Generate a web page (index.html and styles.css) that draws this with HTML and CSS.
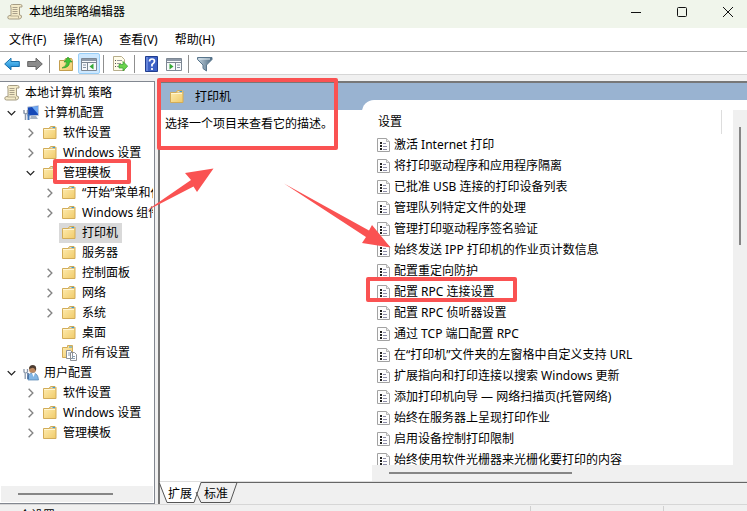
FILE: index.html
```html
<!DOCTYPE html>
<html lang="zh-CN">
<head>
    <meta charset="UTF-8">
    <meta name="viewport" content="width=device-width, initial-scale=1.0">
    <title>本地组策略编辑器</title>
    <link rel="stylesheet" href="styles.css">
</head>
<body>
    <!-- 图标 -->
    <svg class="defs" aria-hidden="true">
        <linearGradient id="gold" x1="0" y1="0" x2="1" y2="1">
            <stop offset="0" stop-color="#ffeeb5"/><stop offset="1" stop-color="#f0ca68"/>
        </linearGradient>
        <linearGradient id="blue" x1="0" y1="0" x2="0" y2="1">
            <stop offset="0" stop-color="#6fd0fa"/><stop offset="1" stop-color="#1480cf"/>
        </linearGradient>
        <linearGradient id="steel" x1="0" y1="0" x2="1" y2="0">
            <stop offset="0" stop-color="#c3d3df"/><stop offset="1" stop-color="#4e6b82"/>
        </linearGradient>
        <symbol id="folder" viewBox="0 0 16 16">
            <path d="M1.500 13.500v-10h6V2.500l1-1h4.500l1 1v11z" fill="url(#gold)" stroke="#d3ac58"/>
            <path d="M8 3.500l1-1.500h4v1.500z" fill="#fff" stroke="#c9a95c" stroke-width=".6"/>
            <path d="M10.500 2.500h2.500" stroke="#3a9bd8"/>
            <path d="M2 4.500h11" stroke="#fff6d4"/>
        </symbol>
        <symbol id="folders" viewBox="0 0 16 16">
            <path d="M1.500 12.500v-10h5V.500h5v12z" fill="url(#gold)" stroke="#d3ac58"/>
            <path d="M8 2h3" stroke="#3a9bd8"/>
            <path d="M5.500 5.500h4l2 2v6h-6zM9.500 7.500h4l2 2v6h-6z" fill="#fff" stroke="#8d9196"/>
            <path d="M7 8h2M7 10h2M11 11.500h3M11 13.500h3" stroke="#8aa0b5"/>
        </symbol>
        <symbol id="scroll" viewBox="0 0 16 16">
            <path d="M3.500 1.500Q4 .5 5.500.5h8q2 0 1.500 2.500h-2.500V11q2.500 0 2 2-.5 2-2.500 2H2.500Q.5 15 .8 13q.2-1.500 2.200-1.500h1V4z" fill="#f4ebc9" stroke="#a69d84"/>
            <path d="M5.500 3.500h5M5.500 5.500h5M5.500 7.500h5M5.500 9.500h5" stroke="#a9a08a"/>
            <path d="M3.500 12h8v2.500" fill="none" stroke="#b7ad90"/>
        </symbol>
        <symbol id="computer" viewBox="0 0 16 16">
            <path d="M4.500 2l11-1.200v9.700L4.500 11z" fill="#1649b8" stroke="#c0cadb"/>
            <path d="M9 2l6-.7V9z" fill="#6fa9f3"/>
            <path d="M8 11h5l2 3H7z" fill="#a7b3c2"/>
            <path d="M1 5v3l1.500 1v6M4.500 5v3L3 9" fill="none" stroke="#8b98aa" stroke-width="1.500"/>
            <path d="M5.500 9v6" stroke="#3e73b9" stroke-width="2"/>
        </symbol>
        <symbol id="user" viewBox="0 0 16 16">
            <circle cx="9.500" cy="4.500" r="3.500" fill="#bd8961"/>
            <path d="M6 4q0-4 4-4t3 6q-2-4-4-3z" fill="#4c3c31"/>
            <path d="M5 15q-1-7 5-7 5 0 5.500 7z" fill="#83b6e4" stroke="#5183b0" stroke-width=".7"/>
            <path d="M9 8l1.500 4L12 8" fill="#fff"/>
            <path d="M1 4v3l1.200 1v6M4.500 4v3L3 8" fill="none" stroke="#8b98aa" stroke-width="1.300"/>
            <path d="M5 8v6" stroke="#3f6596" stroke-width="1.500"/>
        </symbol>
        <symbol id="setting" viewBox="0 0 14 16">
            <path d="M.5 1.500h9l3 3v10H.5z" fill="#fdfdfd" stroke="#a2a2a2"/>
            <path d="M9.500 1.500v3h3" fill="#e9e9e9" stroke="#b5b5b5"/>
            <path d="M3 6h2M3 9h2M3 12h2" stroke="#222" stroke-width="2"/>
            <path d="M6 6.500h3M6 9.500h4M6 12.500h4" stroke="#8c8ca8"/>
        </symbol>
        <symbol id="right" viewBox="0 0 16 16"><path d="M6 3.500L10.500 8 6 12.500" fill="none" stroke="#858585" stroke-width="1.500"/></symbol>
        <symbol id="down" viewBox="0 0 16 16"><path d="M4 6l4 4 4-4" fill="none" stroke="#222" stroke-width="1.500"/></symbol>
    </svg>

    <header class="titlebar">
        <svg class="icon"><use href="#scroll"/></svg>
        <h1>本地组策略编辑器</h1>
        <div class="controls">
            <button aria-label="最小化"><svg viewBox="0 0 10 10"><path d="M0 5.500h10"/></svg></button>
            <button aria-label="最大化"><svg viewBox="0 0 10 10"><rect x=".5" y=".5" width="9" height="9" rx="1"/></svg></button>
            <button aria-label="关闭"><svg viewBox="0 0 10 10"><path d="M0 0l10 10M10 0L0 10"/></svg></button>
        </div>
    </header>

    <nav class="menu">
        <button>文件(F)</button>
        <button>操作(A)</button>
        <button>查看(V)</button>
        <button>帮助(H)</button>
    </nav>

    <div class="toolbar">
        <button aria-label="后退"><svg class="icon" viewBox="0 0 16 16"><path d="M.7 8L7 2.200v3.300h8.300v5H7v3.300z" fill="url(#blue)" stroke="#1770ad"/></svg></button>
        <button aria-label="前进"><svg class="icon" viewBox="0 0 16 16"><path d="M15.300 8L9 2.200v3.300H.7v5H9v3.300z" fill="#8b8b8b" stroke="#666"/></svg></button>
        <span class="sep"></span>
        <button aria-label="上一级"><svg class="icon" viewBox="0 0 16 16"><path d="M1.500 14.500v-10h5l1-2h6l1 2v10z" fill="url(#gold)" stroke="#c39e4e"/><path d="M4 12q5-2 4.500-6H6l4-5 4 5h-2.500q0 6-7.500 6z" fill="#42c235" stroke="#249026" stroke-width=".6"/></svg></button>
        <button class="on" aria-label="显示控制台树"><svg class="icon" viewBox="0 0 16 16"><path d="M.5 2.500h15v12H.5z" fill="#f7f9fb" stroke="#7d8793"/><path d="M1 4h14" stroke="#8d98a7" stroke-width="2"/><path d="M1 6.500h14M6.500 7v7" stroke="#7d8793"/><path d="M2 9h3M2 11.500h3" stroke="#8492a4"/><path d="M12.500 7.500v6L8.500 10.500z" fill="#35a936"/></svg></button>
        <span class="sep"></span>
        <button aria-label="导出列表"><svg class="icon" viewBox="0 0 16 16"><path d="M1.500.500h8l3 3v11h-11z" fill="#fffce9" stroke="#b7ad8b"/><path d="M3 4.500h1M3 7.500h1M3 10.500h1" stroke="#555"/><path d="M5 4.500h5M5 7.500h4M5 10.500h4" stroke="#9a9a9a"/><path d="M7 8.500h4v-3l4.700 4.700L11 15v-3H7z" fill="#6ad34c" stroke="#319b30" stroke-width=".7"/></svg></button>
        <span class="sep"></span>
        <button aria-label="帮助"><svg class="icon" viewBox="0 0 16 16"><path d="M2.500.500h12v15h-12z" fill="#3c61c6" stroke="#203d8e"/><path d="M4 1v14" stroke="#8faaf0"/><path d="M6.500 5.500q0-2.500 2.500-2.500t2.500 2.300Q11.500 7 9 8.500v2M9 12v2" fill="none" stroke="#fff" stroke-width="1.700"/></svg></button>
        <button aria-label="显示操作窗格"><svg class="icon" viewBox="0 0 16 16"><path d="M.5 2.500h15v12H.5z" fill="#f7f9fb" stroke="#7d8793"/><path d="M1 4h14" stroke="#8d98a7" stroke-width="2"/><path d="M1 6.500h14M9.500 7v7" stroke="#7d8793"/><path d="M11 9h3M11 11.500h3" stroke="#8492a4"/><path d="M3.500 7.500v6l4-3z" fill="#35a936"/></svg></button>
        <span class="sep"></span>
        <button aria-label="筛选器"><svg class="icon" viewBox="0 0 16 16"><path d="M.5 1.500h14.500v2L9.500 9v6L6 12.500V9L.5 3.500z" fill="url(#steel)" stroke="#58758c"/><path d="M2 3h11" stroke="#e6f0f6"/></svg></button>
    </div>

    <main class="main">
        <!-- 控制台树 -->
        <aside class="side">
            <div class="tree">
                <div class="row"><span class="item root"><svg class="icon"><use href="#scroll"/></svg>本地计算机 策略</span></div>
                <ul>
                    <li>
                        <div class="row"><svg class="chev"><use href="#down"/></svg><span class="item"><svg class="icon"><use href="#computer"/></svg>计算机配置</span></div>
                        <ul>
                            <li><div class="row"><svg class="chev"><use href="#right"/></svg><span class="item"><svg class="icon"><use href="#folder"/></svg>软件设置</span></div></li>
                            <li><div class="row"><svg class="chev"><use href="#right"/></svg><span class="item"><svg class="icon"><use href="#folder"/></svg>Windows 设置</span></div></li>
                            <li>
                                <div class="row"><svg class="chev"><use href="#down"/></svg><span class="item"><svg class="icon"><use href="#folder"/></svg>管理模板</span></div>
                                <ul>
                                    <li><div class="row"><svg class="chev"><use href="#right"/></svg><span class="item"><svg class="icon"><use href="#folder"/></svg>“开始”菜单和任务栏</span></div></li>
                                    <li><div class="row"><svg class="chev"><use href="#right"/></svg><span class="item"><svg class="icon"><use href="#folder"/></svg>Windows 组件</span></div></li>
                                    <li><div class="row"><span class="chev"></span><span class="item current"><svg class="icon"><use href="#folder"/></svg>打印机</span></div></li>
                                    <li><div class="row"><span class="chev"></span><span class="item"><svg class="icon"><use href="#folder"/></svg>服务器</span></div></li>
                                    <li><div class="row"><svg class="chev"><use href="#right"/></svg><span class="item"><svg class="icon"><use href="#folder"/></svg>控制面板</span></div></li>
                                    <li><div class="row"><svg class="chev"><use href="#right"/></svg><span class="item"><svg class="icon"><use href="#folder"/></svg>网络</span></div></li>
                                    <li><div class="row"><svg class="chev"><use href="#right"/></svg><span class="item"><svg class="icon"><use href="#folder"/></svg>系统</span></div></li>
                                    <li><div class="row"><span class="chev"></span><span class="item"><svg class="icon"><use href="#folder"/></svg>桌面</span></div></li>
                                    <li><div class="row"><span class="chev"></span><span class="item"><svg class="icon"><use href="#folders"/></svg>所有设置</span></div></li>
                                </ul>
                            </li>
                        </ul>
                    </li>
                    <li>
                        <div class="row"><svg class="chev"><use href="#down"/></svg><span class="item"><svg class="icon"><use href="#user"/></svg>用户配置</span></div>
                        <ul>
                            <li><div class="row"><svg class="chev"><use href="#right"/></svg><span class="item"><svg class="icon"><use href="#folder"/></svg>软件设置</span></div></li>
                            <li><div class="row"><svg class="chev"><use href="#right"/></svg><span class="item"><svg class="icon"><use href="#folder"/></svg>Windows 设置</span></div></li>
                            <li><div class="row"><svg class="chev"><use href="#right"/></svg><span class="item"><svg class="icon"><use href="#folder"/></svg>管理模板</span></div></li>
                        </ul>
                    </li>
                </ul>
            </div>
            <div class="hbar side-bar"><span class="thumb"></span></div>
        </aside>

        <!-- 右侧窗格 -->
        <section class="pane">
            <div class="view">
                <div class="desc">
                    <h2><svg class="icon"><use href="#folder"/></svg>打印机</h2>
                    <p>选择一个项目来查看它的描述。</p>
                </div>
                <div class="list">
                    <div class="list-main">
                        <div class="list-head">设置</div>
                        <ul class="settings">
                            <li><svg><use href="#setting"/></svg>激活 Internet 打印</li>
                            <li><svg><use href="#setting"/></svg>将打印驱动程序和应用程序隔离</li>
                            <li><svg><use href="#setting"/></svg>已批准 USB 连接的打印设备列表</li>
                            <li><svg><use href="#setting"/></svg>管理队列特定文件的处理</li>
                            <li><svg><use href="#setting"/></svg>管理打印驱动程序签名验证</li>
                            <li><svg><use href="#setting"/></svg>始终发送 IPP 打印机的作业页计数信息</li>
                            <li><svg><use href="#setting"/></svg>配置重定向防护</li>
                            <li><svg><use href="#setting"/></svg>配置 RPC 连接设置</li>
                            <li><svg><use href="#setting"/></svg>配置 RPC 侦听器设置</li>
                            <li><svg><use href="#setting"/></svg>通过 TCP 端口配置 RPC</li>
                            <li><svg><use href="#setting"/></svg>在“打印机”文件夹的左窗格中自定义支持 URL</li>
                            <li><svg><use href="#setting"/></svg>扩展指向和打印连接以搜索 Windows 更新</li>
                            <li><svg><use href="#setting"/></svg>添加打印机向导 — 网络扫描页(托管网络)</li>
                            <li><svg><use href="#setting"/></svg>始终在服务器上呈现打印作业</li>
                            <li><svg><use href="#setting"/></svg>启用设备控制打印限制</li>
                            <li><svg><use href="#setting"/></svg>始终使用软件光栅器来光栅化要打印的内容</li>
                        </ul>
                    </div>
                    <div class="vbar"><span class="thumb"></span></div>
                    <div class="hbar list-bar"><span class="thumb"></span></div>
                </div>
            </div>
            <div class="tabs">
                <svg class="tabs-line" viewBox="0 0 80 21" aria-hidden="true">
                    <path d="M0 0l8 20h27l7-20z" fill="#fff"/>
                    <path d="M0 0l8 20.500h27L42 .5h36l-7 20H42L37 10" fill="none" stroke="#555"/>
                </svg>
                <button>扩展</button>
                <button>标准</button>
            </div>
        </section>
    </main>

    <footer class="status">
        <span>个设置</span>
        <span></span>
        <span></span>
    </footer>

    <!-- 标注 -->
    <svg class="marks" width="747" height="511" aria-hidden="true">
        <g fill="none" stroke="#fa5252" stroke-width="4" stroke-linejoin="round">
            <rect x="159" y="80" width="177" height="68"/>
            <rect x="55" y="161" width="74" height="21"/>
            <rect x="368" y="279" width="147" height="21"/>
        </g>
        <g fill="#fa5252">
            <path d="M146 211L191 180 185 173 213.500 168.500 197 192 193.500 186.500z"/>
            <path d="M284 183.500L369 230.500 372 225 390.500 247.500 362 243 366 237z"/>
        </g>
    </svg>
</body>
</html>
```

FILE: styles.css
```css
*{
    margin: 0;
    padding: 0;
    box-sizing: border-box;
}
body{
    display: flex;
    flex-direction: column;
    height: 100vh;
    overflow: hidden;
    position: relative;
    background-color: #f0f0f0;
    color: #000;
    font: 12px/20px "Noto Sans", "Noto Sans CJK SC", sans-serif;
}
ul{
    list-style: none;
}
button{
    border: 0;
    background: none;
    color: inherit;
    font: inherit;
}
svg{
    display: block;
    flex: none;
}
.defs{
    position: absolute;
    width: 0;
    height: 0;
}
.icon{
    width: 16px;
    height: 16px;
}
/* 标题栏 */
.titlebar{
    display: flex;
    flex: none;
    align-items: center;
    height: 28px;
    padding: 0 0 4px 7px;
    gap: 6px;
    background-color: #f0f5eb;
}
.titlebar h1{
    flex: 1;
    font-size: 12px;
    font-weight: normal;
}
.controls{
    display: flex;
    gap: 8px;
}
.controls button{
    display: flex;
    align-items: center;
    justify-content: center;
    width: 38px;
    height: 24px;
}
.controls svg{
    width: 10px;
    height: 10px;
    fill: none;
    stroke: #111;
    overflow: visible;
}
/* 菜单 */
.menu{
    display: flex;
    flex: none;
    gap: 17px;
    height: 24px;
    padding: 2px 9px;
    background-color: #fff;
    border-bottom: 1px solid #aaa;
}
/* 工具栏 */
.toolbar{
    display: flex;
    flex: none;
    align-items: center;
    gap: 1px;
    height: 23px;
    padding: 1px 1px 0;
    background-color: #fff;
    border-bottom: 1px solid #d6d6d6;
}
.toolbar button{
    display: flex;
    align-items: center;
    justify-content: center;
    width: 22px;
    height: 21px;
}
.toolbar .on{
    background-color: #cde8ff;
    border: 1px solid #99cff8;
    border-radius: 2px;
}
.sep{
    width: 1px;
    height: 18px;
    margin: 0 4px 0 2px;
    background-color: #8f8f8f;
}
/* 主体 */
.main{
    display: flex;
    flex: 1;
    min-height: 0;
    gap: 3px;
    padding-top: 6px;
}
.side{
    display: flex;
    flex-direction: column;
    width: 155px;
    background-color: #fff;
    border: 1px solid #828790;
    border-left: 0;
}
.tree{
    flex: 1;
    min-height: 0;
    margin-right: 1px;
    overflow: hidden;
    padding: 1px 0 0 4px;
}
.tree ul ul{
    padding-left: 19px;
}
.row{
    display: flex;
    height: 20px;
    white-space: nowrap;
}
.chev{
    flex: none;
    width: 15px;
    height: 20px;
}
.item{
    display: flex;
    align-items: center;
    gap: 5px;
    margin-left: 2px;
    padding: 0 4px 0 2px;
}
.root{
    margin-left: 0;
    padding-left: 0;
}
.current{
    background-color: #d9d9d9;
}
/* 滚动条 */
.hbar,
.vbar{
    display: flex;
    background-color: #f0f0f0;
}
.hbar{
    align-items: center;
    height: 16px;
}
.hbar .thumb{
    height: 2px;
    background-color: #868686;
}
.side-bar{
    margin: 0 1px 1px;
    padding-left: 17px;
}
.side-bar .thumb{
    width: 70%;
}
.vbar{
    justify-content: center;
    margin-top: 10px;
    padding-top: 17px;
}
.vbar .thumb{
    width: 2px;
    height: 35%;
    background-color: #868686;
}
.list-bar{
    grid-column: 1 / 3;
    margin-left: 10px;
    padding-left: 17px;
}
.list-bar .thumb{
    width: 51%;
}
/* 右侧窗格 */
.pane{
    display: flex;
    flex: 1;
    flex-direction: column;
    min-width: 0;
    border-left: 2px solid #777;
    border-top: 2px solid #777;
}
.view{
    display: flex;
    flex: 1;
    min-height: 0;
    background: linear-gradient(#99b3d1 27px, #fff 27px);
    border-bottom: 1px solid #ddd;
}
.desc{
    width: 202px;
}
.desc h2{
    display: flex;
    align-items: center;
    gap: 10px;
    height: 27px;
    padding-left: 9px;
    font-size: 12px;
    font-weight: normal;
}
.desc p{
    padding: 4px 5px;
}
.list{
    display: grid;
    flex: 1;
    grid-template-columns: 1fr 14px;
    grid-template-rows: 1fr 16px;
    min-width: 0;
    margin-top: 17px;
    background-color: #fff;
    border-top-left-radius: 12px;
}
.list-main{
    min-width: 0;
    min-height: 0;
    overflow: hidden;
    padding: 10px 11px 0 15px;
}
.list-head{
    height: 24px;
    padding-left: 1px;
    line-height: 24px;
    border-right: 1px solid #ddd;
}
.settings li{
    display: flex;
    align-items: center;
    gap: 3px;
    height: 21px;
    white-space: nowrap;
}
.settings svg{
    width: 14px;
    height: 16px;
}
/* 底部标签 */
.tabs{
    display: flex;
    flex: none;
    position: relative;
    gap: 12px;
    height: 22px;
    padding-left: 8px;
    border-top: 1px solid #666;
}
.tabs button{
    position: relative;
}
.tabs-line{
    position: absolute;
    top: -1px;
    left: -1px;
    width: 80px;
    height: 21px;
}
/* 状态栏 */
.status{
    display: flex;
    flex: none;
    height: 7px;
    overflow: hidden;
    border-top: 1px solid #d6d6d6;
}
.status span{
    flex: none;
    width: 133px;
    height: 20px;
    margin-top: 1px;
    border-right: 1px solid #d0d0d0;
}
.status span:first-child{
    flex: 1;
    padding-left: 19px;
}
.status span:last-child{
    width: 83px;
    border-right: 0;
}
/* 标注 */
.marks{
    position: absolute;
    top: 0;
    left: 0;
    pointer-events: none;
}
```
